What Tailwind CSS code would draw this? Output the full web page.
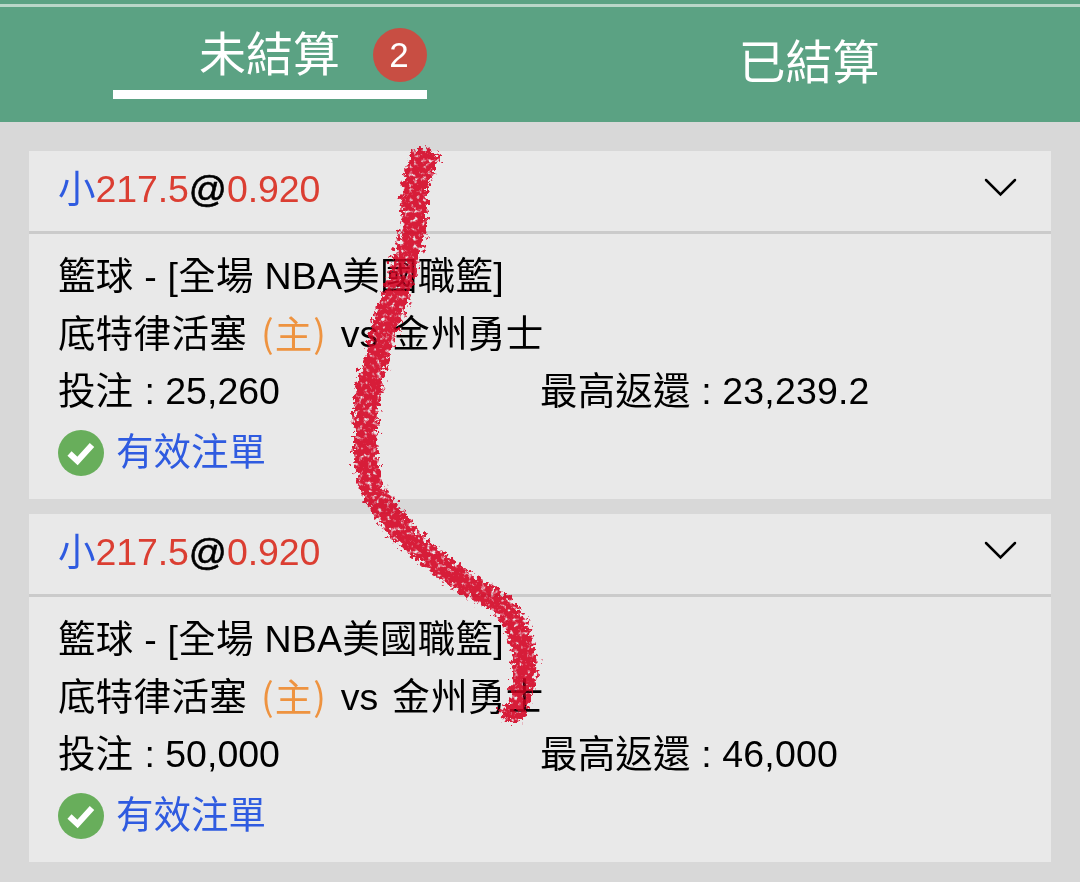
<!DOCTYPE html>
<html lang="zh-Hant">
  <head>
    <meta charset="UTF-8" />
    <meta name="viewport" content="width=device-width, initial-scale=1.0" />
    <title>注單</title>
    <script src="https://cdn.jsdelivr.net/npm/@tailwindcss/browser@4"></script>
  </head>
  <body class="relative h-[882px] overflow-hidden bg-[#d8d8d8] font-['Liberation_Sans','Noto_Sans_CJK_TC',sans-serif] text-[37.5px] text-black">
    <!-- tabs -->
    <div class="h-1 bg-[#5ba283]"></div>
    <div class="h-[3px] bg-[#b9d6c8]"></div>
    <nav class="grid h-[115px] grid-cols-2 bg-[#5ba283] text-[47px] text-white">
      <div class="flex justify-center">
        <div class="flex h-[92px] w-[314px] items-center justify-end border-b-9 border-white pt-[12px]">
          <span class="leading-[60px]">未結算</span>
          <span class="ml-[33px] flex size-[54px] items-center justify-center rounded-full bg-[#c84e43] pr-[2px] text-[35px] leading-none">2</span>
        </div>
      </div>
      <div class="flex h-[112px] items-center justify-center pr-[2px] leading-[60px]">已結算</div>
    </nav>

    <!-- bet list -->
    <main class="flex flex-col gap-[15px] px-[29px] pt-[29px]">
      <section class="h-[348px] bg-[#e9e9e9]">
        <div class="flex h-[83px] items-center justify-between border-b-3 border-[#cbcbcb] pr-[34px] pl-[29px]">
          <div class="-mt-[3px] whitespace-nowrap"><span class="text-[#2f5be0]">小</span><span class="tracking-[-0.1px] text-[#db3e32]">217.5</span><span class="[-webkit-text-stroke:0.6px_#000]">@</span><span class="tracking-[-0.1px] text-[#db3e32]">0.920</span></div>
          <svg class="-mt-2 h-[19px] w-[33px]" viewBox="0 0 33 19" fill="none" stroke="#000" stroke-width="2.5" stroke-linecap="round"><path d="M2 2L16.5 16.5L31 2" /></svg>
        </div>
        <div class="pt-[14px] pl-[29px] leading-[57.6px] whitespace-nowrap">
          <div class="tracking-[0.25px]">籃球 - [全場 NBA美國職籃]</div>
          <div class="flex"><span class="tracking-[0.3px]">底特律活塞</span><span class="ml-[14px] -mt-[3px] font-['Noto_Sans_CJK_TC'] tracking-[1px] text-[#ee9340]">(主)</span><span class="ml-[14px]">vs</span><span class="ml-[14px] tracking-[0.3px]">金州勇士</span></div>
          <div class="grid grid-cols-[482px_1fr]"><span>投注<span class="ml-[1px]"> : 25,260</span></span><span class="tracking-[0.15px]">最高返還 : 23,239.2</span></div>
          <div class="flex h-[64px] items-center text-[#2f5be0]">
            <svg class="mr-3 size-[46px]" viewBox="0 0 46 46"><circle cx="23" cy="23" r="23" fill="#68ae5b" /><path d="M11.5 23.5L19.5 31L34 15" fill="none" stroke="#fff" stroke-width="6" /></svg>
            有效注單
          </div>
        </div>
      </section>

      <section class="h-[348px] bg-[#e9e9e9]">
        <div class="flex h-[83px] items-center justify-between border-b-3 border-[#cbcbcb] pr-[34px] pl-[29px]">
          <div class="-mt-[3px] whitespace-nowrap"><span class="text-[#2f5be0]">小</span><span class="tracking-[-0.1px] text-[#db3e32]">217.5</span><span class="[-webkit-text-stroke:0.6px_#000]">@</span><span class="tracking-[-0.1px] text-[#db3e32]">0.920</span></div>
          <svg class="-mt-2 h-[19px] w-[33px]" viewBox="0 0 33 19" fill="none" stroke="#000" stroke-width="2.5" stroke-linecap="round"><path d="M2 2L16.5 16.5L31 2" /></svg>
        </div>
        <div class="pt-[14px] pl-[29px] leading-[57.6px] whitespace-nowrap">
          <div class="tracking-[0.25px]">籃球 - [全場 NBA美國職籃]</div>
          <div class="flex"><span class="tracking-[0.3px]">底特律活塞</span><span class="ml-[14px] -mt-[3px] font-['Noto_Sans_CJK_TC'] tracking-[1px] text-[#ee9340]">(主)</span><span class="ml-[14px]">vs</span><span class="ml-[14px] tracking-[0.3px]">金州勇士</span></div>
          <div class="grid grid-cols-[482px_1fr]"><span>投注<span class="ml-[1px]"> : 50,000</span></span><span class="tracking-[0.15px]">最高返還 : 46,000</span></div>
          <div class="flex h-[64px] items-center text-[#2f5be0]">
            <svg class="mr-3 size-[46px]" viewBox="0 0 46 46"><circle cx="23" cy="23" r="23" fill="#68ae5b" /><path d="M11.5 23.5L19.5 31L34 15" fill="none" stroke="#fff" stroke-width="6" /></svg>
            有效注單
          </div>
        </div>
      </section>
    </main>

    <!-- red crayon mark -->
    <svg class="pointer-events-none absolute inset-0 h-[882px] w-[1080px]" viewBox="0 0 1080 882">
      <defs>
        <filter id="crayon" filterUnits="userSpaceOnUse" x="330" y="130" width="230" height="610" color-interpolation-filters="sRGB">
          <feTurbulence type="fractalNoise" baseFrequency="0.22" numOctaves="3" seed="4" result="noise" />
          <feDisplacementMap in="SourceGraphic" in2="noise" scale="17" xChannelSelector="R" yChannelSelector="G" result="rough" />
          <feColorMatrix in="noise" type="matrix" values="0 0 0 0 0  0 0 0 0 0  0 0 0 0 0  0 0 4 0 -0.8" result="grain" />
          <feComposite in="rough" in2="grain" operator="in" result="specks" />
          <feFlood flood-color="#df0631" />
          <feComposite in2="specks" operator="in" />
          <feGaussianBlur stdDeviation="0.6" />
        </filter>
        <path id="mark" d="M411 150L425 148L440 156L433 174L427 190L427 220L424 240L419 257L413 285L405 310L396 335L388 360L383 380L378 410L377 430L378 465L384 487L398 505L420 533L445 555L470 573L495 587L511 600L524 615L532 635L537 660L534 690L528 706L522 722L507 722L498 712L509 703L511 690L513 655L507 635L497 615L488 608L465 596L440 579L415 559L390 536L370 511L360 490L354 460L354 430L353 410L357 380L365 360L368 340L374 315L384 290L392 260L398 240L403 220L401 200L403 180L409 164Z" />
      </defs>
      <use href="#mark" filter="url(#crayon)" fill="#df0631" fill-opacity="0.84" />
      <use href="#mark" filter="url(#crayon)" fill="#df0631" fill-opacity="0.35" class="mix-blend-multiply" />
    </svg>
  </body>
</html>
